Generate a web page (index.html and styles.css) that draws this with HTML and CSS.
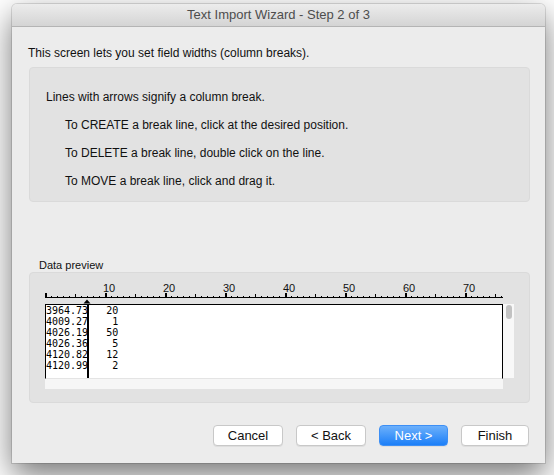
FILE: index.html
```html
<!DOCTYPE html>
<html>
<head>
<meta charset="utf-8">
<link rel="stylesheet" href="styles.css">
</head>
<body>
<div class="stage">
  <div class="window">
    <div class="titlebar">Text Import Wizard - Step 2 of 3</div>
    <div class="content">
      <p class="intro">This screen lets you set field widths (column breaks).</p>
      <div class="panel instructions">
        <p class="line">Lines with arrows signify a column break.</p>
        <p class="line indent">To CREATE a break line, click at the desired position.</p>
        <p class="line indent">To DELETE a break line, double click on the line.</p>
        <p class="line indent">To MOVE a break line, click and drag it.</p>
      </div>
      <div class="preview-label">Data preview</div>
      <div class="panel preview">
        <svg class="ruler" width="470" height="32" viewBox="0 0 470 32">
          <defs>
            <pattern id="tickS" width="6" height="32" patternUnits="userSpaceOnUse">
              <rect x="0" y="24" width="1" height="1" fill="#000"/>
            </pattern>
            <pattern id="tickM" width="30" height="32" patternUnits="userSpaceOnUse">
              <rect x="0" y="22" width="1" height="3" fill="#000"/>
            </pattern>
            <pattern id="tickL" width="60" height="32" patternUnits="userSpaceOnUse">
              <rect x="0" y="21" width="2" height="4" fill="#000"/>
            </pattern>
          </defs>
          <rect x="0" y="0" width="457" height="32" fill="url(#tickS)"/>
          <rect x="0" y="0" width="457" height="32" fill="url(#tickM)"/>
          <rect x="0" y="0" width="457" height="32" fill="url(#tickL)"/>
          <rect x="0" y="25" width="458" height="1" fill="#000"/>
          <g class="ruler-num" font-family="Liberation Sans, Arial, sans-serif" font-size="11" fill="#111">
            <text x="58" y="20">10</text>
            <text x="118" y="20">20</text>
            <text x="178" y="20">30</text>
            <text x="238" y="20">40</text>
            <text x="298" y="20">50</text>
            <text x="358" y="20">60</text>
            <text x="418" y="20">70</text>
          </g>
          <polygon points="38.5,31.5 45.5,31.5 42,27.5" fill="#000"/>
        </svg>
        <div class="data-row">
          <div class="databox">
<pre class="data">3964.73   20
4009.27    1
4026.19   50
4026.36    5
4120.82   12
4120.99    2</pre>
            <div class="breakline"></div>
          </div>
          <div class="vscroll"><div class="thumb"></div></div>
        </div>
        <div class="hscroll"></div>
      </div>
      <div class="buttons">
        <button class="btn w70">Cancel</button>
        <button class="btn w70">&lt; Back</button>
        <button class="btn primary w69">Next &gt;</button>
        <button class="btn w68">Finish</button>
      </div>
    </div>
  </div>
</div>
</body>
</html>
```
FILE: styles.css
```css
html, body {
  margin: 0;
  padding: 0;
  background: #ffffff;
}
body {
  width: 554px;
  height: 475px;
  overflow: hidden;
  font-family: "Liberation Sans", Arial, sans-serif;
}
.stage {
  padding: 4px 0 0 12px;
}
.window {
  width: 533px;
  height: 459px;
  background: #ececec;
  border-radius: 5px 5px 0 0;
  box-shadow: 0 0 0 1px rgba(0,0,0,0.12), 0 12px 32px rgba(0,0,0,0.55);
  overflow: hidden;
}
.titlebar {
  height: 22px;
  line-height: 22px;
  text-align: center;
  font-size: 13px;
  color: #4d4d4d;
  background: linear-gradient(#ececec, #d4d4d4);
  border-bottom: 1px solid #b4b4b4;
}
.content {
  padding: 19px 15px 0 17px;
}
.intro {
  margin: 0 0 0 -1px;
  font-size: 12px;
  line-height: 15px;
  color: #111;
}
.panel {
  background: #e2e2e2;
  border: 1px solid #dadada;
  border-radius: 4px;
  box-sizing: border-box;
  width: 501px;
}
.instructions {
  margin-top: 6px;
  height: 135px;
  padding: 21px 0 0 16px;
}
.line {
  margin: 0 0 12px 0;
  font-size: 12px;
  line-height: 16px;
  color: #111;
}
.indent {
  padding-left: 19px;
}
.preview-label {
  margin-top: 56px;
  padding-left: 10px;
  font-size: 11px;
  line-height: 14px;
  color: #111;
}
.preview {
  height: 131px;
  padding: 0 0 0 15px;
}
.ruler {
  display: block;
  margin-top: -1px;
}
.data-row {
  display: flex;
}
.databox {
  position: relative;
  width: 456px;
  height: 73px;
  background: #fff;
  border: 1px solid #000;
  border-bottom: 1px solid #e4e4e4;
}
.data {
  margin: 0;
  font-family: "DejaVu Sans Mono", "Liberation Mono", monospace;
  font-size: 10px;
  line-height: 11px;
  color: #000;
}
.breakline {
  position: absolute;
  left: 41px;
  top: 0;
  bottom: 0;
  width: 2px;
  background: #000;
}
.vscroll {
  width: 11px;
  height: 74px;
  background: #f8f8f8;
  padding: 1px 0 0 3px;
  box-sizing: border-box;
}
.thumb {
  width: 6px;
  height: 14px;
  border-radius: 3px;
  background: #c2c2c2;
}
.hscroll {
  width: 458px;
  height: 10px;
  background: #f6f6f6;
}
.buttons {
  display: flex;
  justify-content: flex-end;
  gap: 13px;
  margin-top: 22px;
  padding-right: 1px;
}
.btn {
  height: 21px;
  box-sizing: border-box;
  border: 1px solid #c8c8c8;
  border-radius: 4px;
  background: #ffffff;
  font-family: "Liberation Sans", Arial, sans-serif;
  font-size: 13px;
  color: #111;
  padding: 0;
  line-height: 19px;
  box-shadow: 0 1px 0 rgba(0,0,0,0.06);
}
.primary {
  background: linear-gradient(#6cb0fb, #1c7ff8);
  border-color: #3d8ff5;
  color: #ffffff;
}
.w70 { width: 70px; }
.w69 { width: 69px; }
.w68 { width: 68px; }
```
